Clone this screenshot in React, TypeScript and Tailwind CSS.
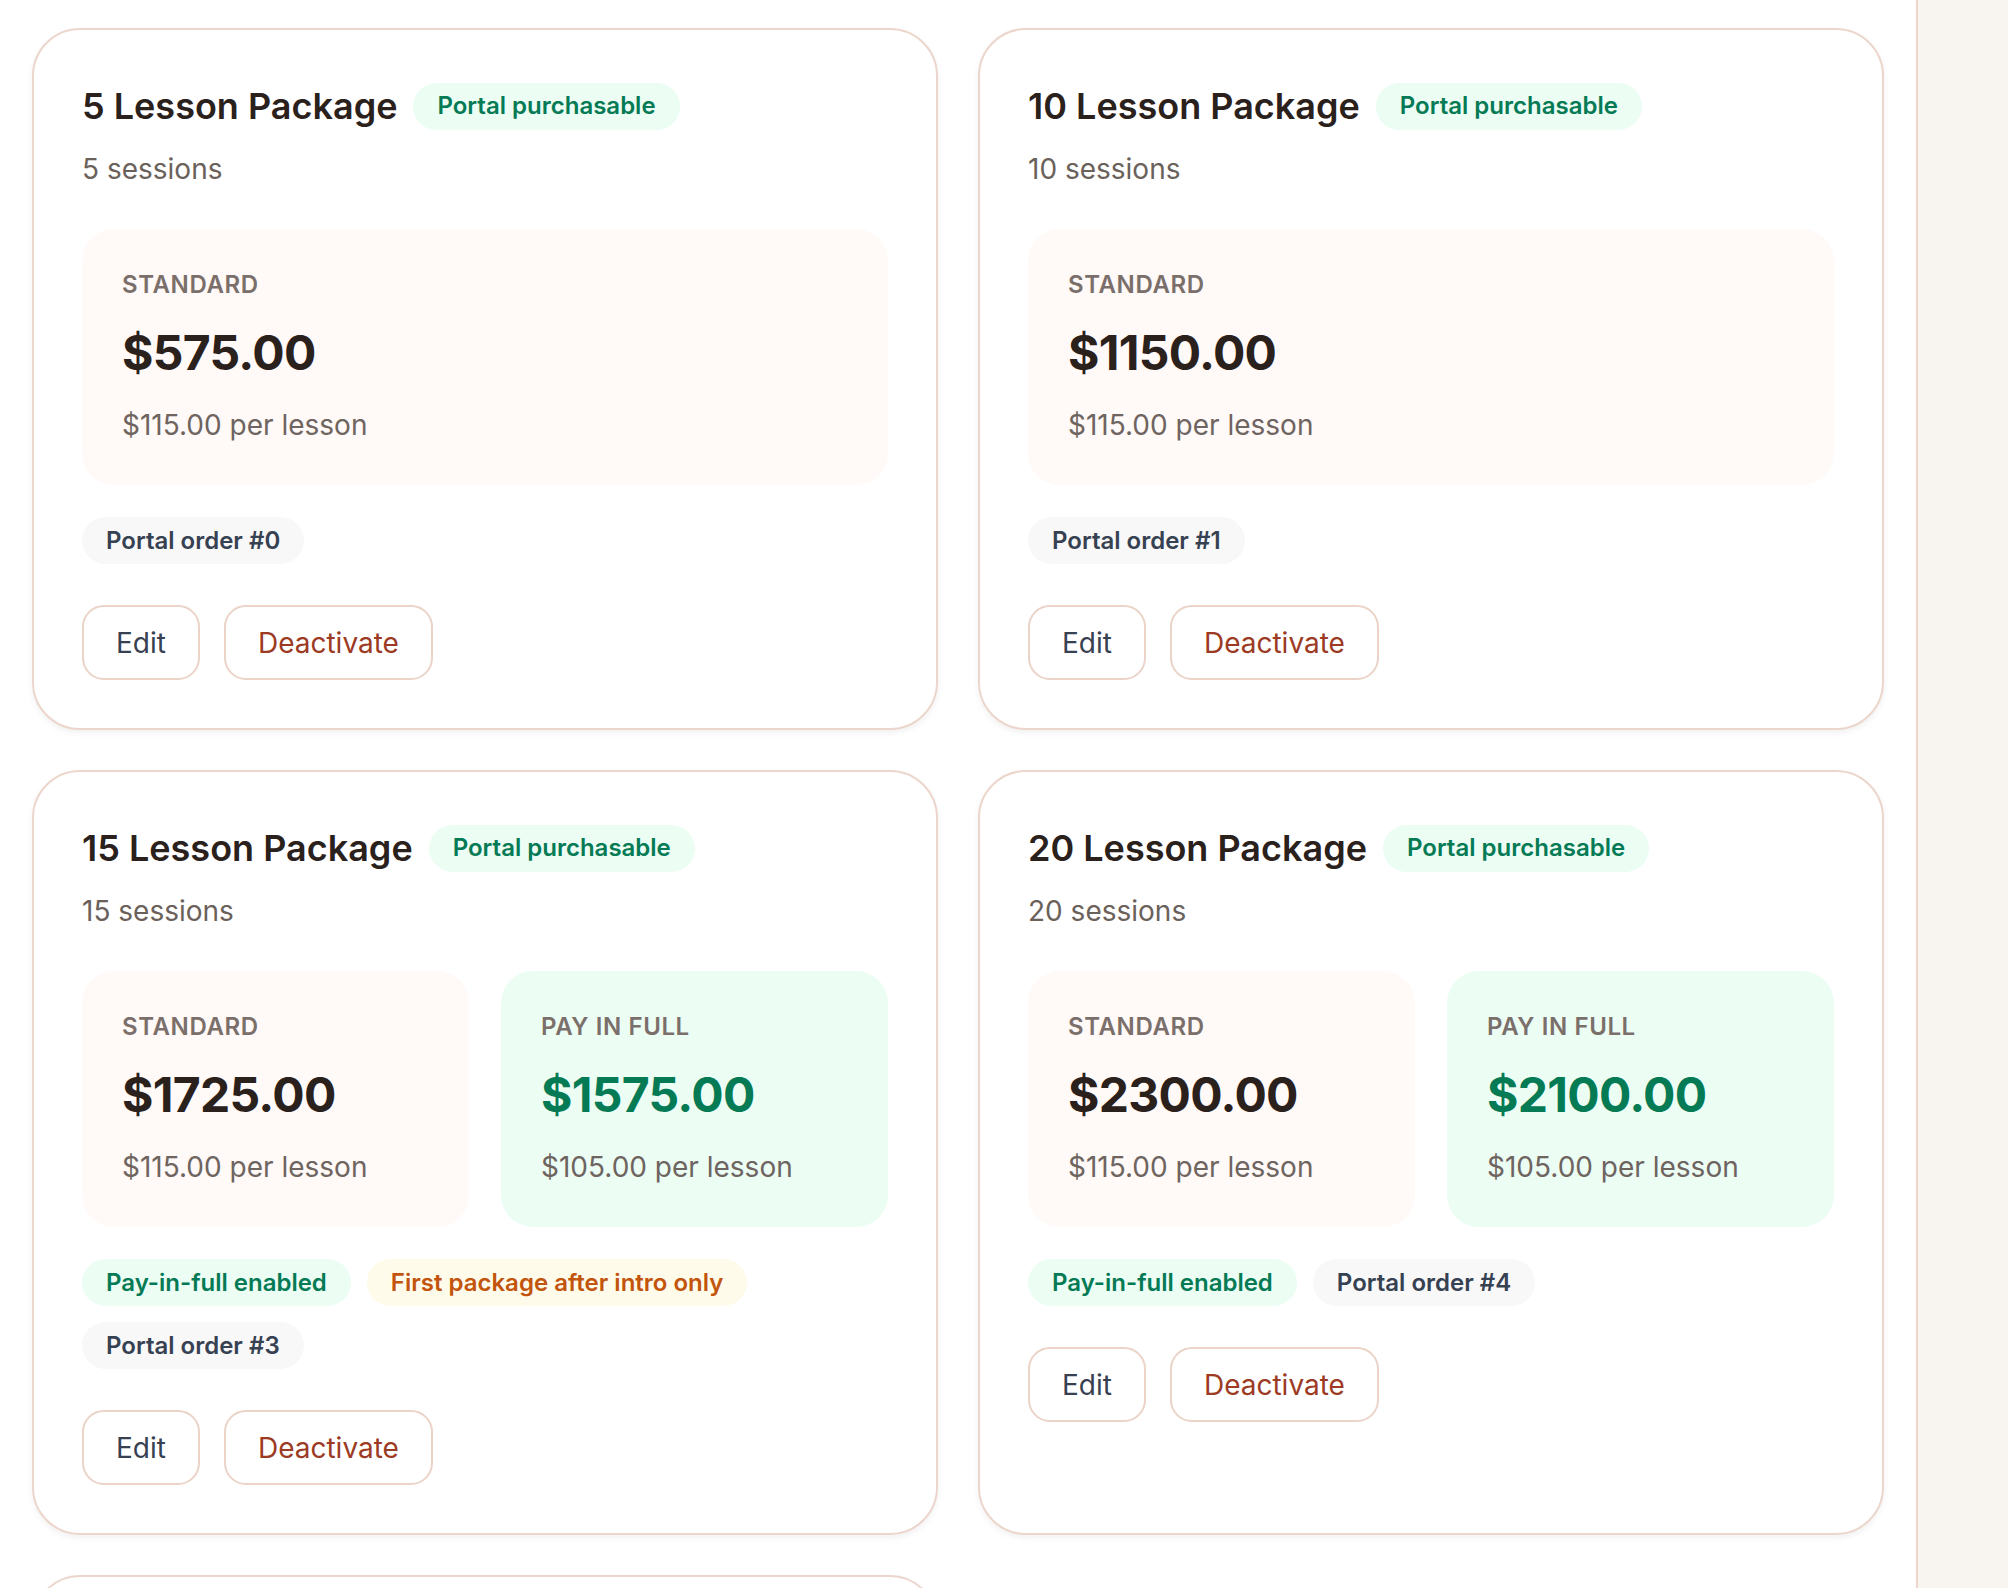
import React from "react";

type Pkg = {
  name: string;
  sessions: string;
  std: string;
  stdPer: string;
  full?: string;
  fullPer?: string;
  payInFull?: boolean;
  firstOnly?: boolean;
  order: number;
};

const pkgs: Pkg[] = [
  { name: "5 Lesson Package", sessions: "5 sessions", std: "$575.00", stdPer: "$115.00 per lesson", order: 0 },
  { name: "10 Lesson Package", sessions: "10 sessions", std: "$1150.00", stdPer: "$115.00 per lesson", order: 1 },
  {
    name: "15 Lesson Package",
    sessions: "15 sessions",
    std: "$1725.00",
    stdPer: "$115.00 per lesson",
    full: "$1575.00",
    fullPer: "$105.00 per lesson",
    payInFull: true,
    firstOnly: true,
    order: 3,
  },
  {
    name: "20 Lesson Package",
    sessions: "20 sessions",
    std: "$2300.00",
    stdPer: "$115.00 per lesson",
    full: "$2100.00",
    fullPer: "$105.00 per lesson",
    payInFull: true,
    order: 4,
  },
];

function PriceBox({ label, price, per, green }: { label: string; price: string; per: string; green?: boolean }) {
  return (
    <div className={`flex-1 rounded-[32px] p-[40px] ${green ? "bg-[#ecfdf4]" : "bg-[#fff9f7]"}`}>
      <div className="text-[24px] leading-[32px] font-semibold uppercase tracking-wide text-[#7a6f6a]">{label}</div>
      <div
        className={`mt-[20px] text-[48px] leading-[64px] font-bold tracking-[-0.7px] ${
          green ? "text-[#047a55]" : "text-[#2b211c]"
        }`}
      >
        {price}
      </div>
      <div className="mt-[20px] text-[28px] leading-[40px] text-[#6e6460]">{per}</div>
    </div>
  );
}

function Chip({ children, tone }: { children: React.ReactNode; tone: "green" | "amber" | "gray" }) {
  const cls =
    tone === "green"
      ? "bg-[#ecfdf4] text-[#047a55]"
      : tone === "amber"
      ? "bg-[#fefbea] text-[#c2540c]"
      : "bg-[#f8f8f8] text-[#364152]";
  return (
    <span className={`inline-flex h-[47px] items-center rounded-full px-6 text-[24px] font-semibold ${cls}`}>
      {children}
    </span>
  );
}

function Card({ p }: { p: Pkg }) {
  return (
    <div className="rounded-[48px] border-2 border-[#ecd6cc] bg-white p-12 shadow-[0_3px_6px_rgba(0,0,0,0.06)]">
      <div className="mt-[2px] flex h-[52px] items-center gap-4">
        <h3 className="text-[36px] leading-[52px] font-semibold text-[#2b211c]">{p.name}</h3>
        <Chip tone="green">Portal purchasable</Chip>
      </div>
      <div className="mt-[17px] text-[28px] leading-[40px] text-[#6b615b]">{p.sessions}</div>
      <div className="mt-10 flex gap-8">
        <PriceBox label="Standard" price={p.std} per={p.stdPer} />
        {p.full && <PriceBox label="Pay in full" price={p.full} per={p.fullPer!} green />}
      </div>
      <div className="mt-8 flex flex-wrap gap-x-4 gap-y-[16px]">
        {p.payInFull && <Chip tone="green">Pay-in-full enabled</Chip>}
        {p.firstOnly && <Chip tone="amber">First package after intro only</Chip>}
        <Chip tone="gray">Portal order #{p.order}</Chip>
      </div>
      <div className="mt-[41px] flex gap-6">
        <button className="h-[75px] rounded-[22px] border-2 border-[#ebd3c8] bg-white px-8 text-[28px] text-[#374151]">
          Edit
        </button>
        <button className="h-[75px] rounded-[22px] border-2 border-[#ebd3c8] bg-white px-8 text-[28px] text-[#9c3a24]">
          Deactivate
        </button>
      </div>
    </div>
  );
}

export default function App() {
  return (
    <div
      className="flex h-[1588px] overflow-hidden bg-[#f8f4ef]"
      style={{ fontFamily: "Inter, 'Noto Sans', sans-serif" }}
    >
      <main className="w-[1918px] shrink-0 border-r-2 border-[#ecd6cc] bg-white px-8 pt-7">
        <div className="grid grid-cols-2 gap-x-10 gap-y-10">
          {pkgs.map((p) => (
            <Card key={p.name} p={p} />
          ))}
          <div className="h-[300px] rounded-[48px] border-2 border-[#ecd6cc] bg-white shadow-[0_3px_6px_rgba(0,0,0,0.06)]" />
        </div>
      </main>
      <aside className="flex-1 bg-[#f8f4ef]" />
    </div>
  );
}
